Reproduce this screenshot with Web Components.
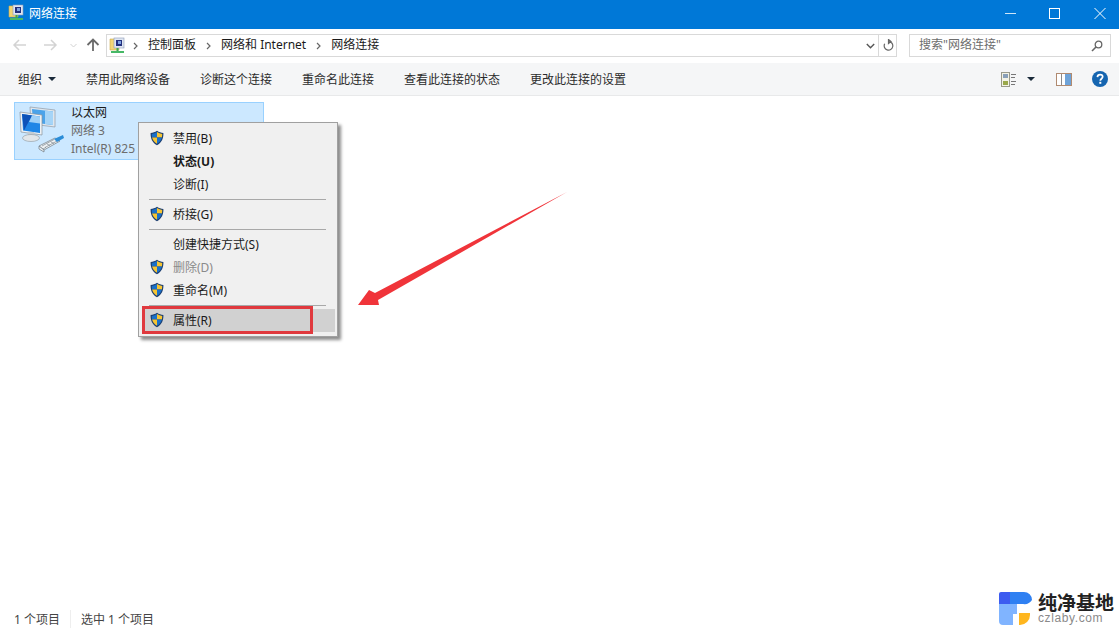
<!DOCTYPE html>
<html lang="zh-CN">
<head>
<meta charset="utf-8">
<title>网络连接</title>
<style>
  html, body { margin: 0; height: 100%; overflow: hidden; background: #fff; }
  body { font-family: "Noto Sans", "Noto Sans CJK SC", sans-serif; font-size: 12px; color: #1a1a1a; }
</style>
</head>
<body>
<net-window></net-window>

<script>
const FOLDER_ICON = `
  <svg width="17" height="17" viewBox="0 0 17 17">
    <path d="M1 2h5l1 1h3v10H1z" fill="#f2d675" stroke="#c9a94a" stroke-width=".6"/>
    <rect x="5" y="1" width="10" height="10" fill="#dfe6f2" stroke="#8d9ab5" stroke-width=".6"/>
    <rect x="7" y="3" width="6" height="6" fill="#23307e"/>
    <rect x="9" y="4" width="3" height="3" fill="#7da2e0"/>
    <rect x="7.5" y="11" width="2" height="3" fill="#3aa655"/>
    <rect x="2" y="14" width="13" height="2" fill="#46b866"/>
  </svg>`;

class ShieldIcon extends HTMLElement {
  connectedCallback() {
    this.attachShadow({ mode: "open" }).innerHTML = `
      <style>:host { display: block; width: 16px; height: 16px; } svg { display: block; }</style>
      <svg width="16" height="16" viewBox="0 0 16 16">
        <path d="M8 .8C6 2.2 4 2.8 1.6 3c-.2 5.400 1.600 9.600 6.400 12.200C12.800 12.600 14.600 8.400 14.400 3 12 2.800 10 2.200 8 .8z" fill="#1d3f70"/>
        <path d="M8 2C6.400 3 4.600 3.600 2.800 3.900c0 .9.100 2.200.3 3.600H8z" fill="#1a70c8"/>
        <path d="M8 2c1.600 1 3.400 1.600 5.200 1.900 0 .9-.100 2.200-.3 3.600H8z" fill="#f7c531"/>
        <path d="M3.100 7.500H8v6.300C5.200 12 3.700 10 3.100 7.500z" fill="#f7c531"/>
        <path d="M12.900 7.500H8v6.300c2.800-1.800 4.300-3.800 4.900-6.300z" fill="#1a70c8"/>
      </svg>`;
  }
}
customElements.define("shield-icon", ShieldIcon);

class TitleBar extends HTMLElement {
  connectedCallback() {
    this.attachShadow({ mode: "open" }).innerHTML = `
      <style>
        :host { display: flex; align-items: center; height: 29px; background: #0078d7; color: #fff; padding-left: 8px; font-size: 12px; }
        .icon { display: flex; width: 21px; margin-bottom: 4px; }
        .name { flex: 1; margin-bottom: 4px; }
        .ctl { display: flex; margin-right: -4px; }
        .ctl svg { display: block; width: 45px; height: 29px; }
      </style>
      <span class="icon">${FOLDER_ICON}</span>
      <span class="name">网络连接</span>
      <span class="ctl">
        <svg viewBox="0 0 45 29"><path d="M17 13.500h11" stroke="#cfe6f8" fill="none"/></svg>
        <svg viewBox="0 0 45 29"><rect x="16.500" y="8.500" width="10" height="10" stroke="#fff" fill="none"/></svg>
        <svg viewBox="0 0 45 29"><path d="M16.500 8l11 11M27.500 8l-11 11" stroke="#fff" fill="none"/></svg>
      </span>`;
  }
}
customElements.define("title-bar", TitleBar);

class NavBar extends HTMLElement {
  connectedCallback() {
    const chevron = `<svg width="6" height="8" viewBox="0 0 6 8"><path d="M1 1l3 3-3 3" fill="none" stroke="#666" stroke-width="1.200"/></svg>`;
    this.attachShadow({ mode: "open" }).innerHTML = `
      <style>
        :host { display: flex; align-items: center; height: 34px; box-sizing: border-box; background: #fff; padding: 0 8px 1px 0; font-size: 12px; color: #1a1a1a; }
        .arrows { display: flex; width: 106px; flex: none; margin-bottom: 2px; }
        .arrows svg { display: block; }
        .box { display: flex; align-items: center; height: 23px; box-sizing: border-box; border: 1px solid #d9d9d9; background: #fff; }
        .addr { width: 791px; flex: none; }
        .folder { display: flex; margin-left: 2px; }
        .sep { display: flex; width: 25px; justify-content: center; flex: none; }
        .sep.first { width: 21px; margin-left: 1px; justify-content: flex-start; padding-left: 6px; box-sizing: border-box; }
        .crumb, .hint { white-space: nowrap; margin-bottom: 3px; }
        .tail { margin-left: auto; display: flex; align-items: center; height: 100%; }
        .drop { width: 15px; display: flex; justify-content: center; }
        .refresh { width: 17px; height: 100%; border-left: 1px solid #d9d9d9; display: flex; align-items: center; justify-content: center; }
        .search { width: 202px; flex: none; margin-left: 12px; padding: 0 7px 0 9px; color: #6d6d6d; justify-content: space-between; }
      </style>
      <span class="arrows">
        <svg width="106" height="22" viewBox="0 0 106 22">
          <g fill="none" stroke="#d3d3d3" stroke-width="1.500">
            <path d="M14 11h12M19 6l-5 5 5 5"/>
            <path d="M56 11H44M51 6l5 5-5 5"/>
            <path d="M70.500 10l3 3 3-3" stroke-width="1"/>
          </g>
          <path d="M93 17V6M87.500 11L93 5.500l5.500 5.500" fill="none" stroke="#6a6a6a" stroke-width="1.800"/>
        </svg>
      </span>
      <span class="box addr">
        <span class="folder">${FOLDER_ICON}</span>
        <span class="sep first">${chevron}</span>
        <span class="crumb">控制面板</span>
        <span class="sep">${chevron}</span>
        <span class="crumb">网络和 Internet</span>
        <span class="sep">${chevron}</span>
        <span class="crumb">网络连接</span>
        <span class="tail">
          <span class="drop"><svg width="9" height="6" viewBox="0 0 9 6"><path d="M.8 1l3.700 3.700L8.200 1" fill="none" stroke="#555" stroke-width="1.400"/></svg></span>
          <span class="refresh"><svg width="12" height="13" viewBox="0 0 12 13"><path d="M6.500 2.500a4.300 4.300 0 1 1-3.800 2.300M6.500 .5v4L9 2.500z" fill="none" stroke="#666" stroke-width="1.200"/></svg></span>
        </span>
      </span>
      <span class="box search">
        <span class="hint">搜索"网络连接"</span>
        <svg width="12" height="12" viewBox="0 0 12 12"><circle cx="7.500" cy="4.500" r="3.300" fill="none" stroke="#666" stroke-width="1.300"/><path d="M5 7l-4 4" stroke="#666" stroke-width="1.600"/></svg>
      </span>`;
  }
}
customElements.define("nav-bar", NavBar);

class ToolBar extends HTMLElement {
  connectedCallback() {
    const labels = ["禁用此网络设备", "诊断这个连接", "重命名此连接", "查看此连接的状态", "更改此连接的设置"];
    this.attachShadow({ mode: "open" }).innerHTML = `
      <style>
        :host { display: flex; align-items: center; gap: 30px; height: 33px; box-sizing: border-box; padding: 0 11px 0 18px; background: #f5f6f7; border-bottom: 1px solid #e8e9ea; font-size: 12px; color: #2b2b2b; }
        .org { display: flex; align-items: center; gap: 6px; }
        .tri { width: 0; height: 0; border: 4px solid transparent; border-top: 4px solid #1a2a3a; border-bottom: 0; }
        .right { margin-left: auto; display: flex; align-items: center; }
        .right svg { display: block; }
      </style>
      <span class="org">组织<span class="tri"></span></span>
      ${labels.map(t => `<span>${t}</span>`).join("")}
      <span class="right">
        <svg width="15" height="15" viewBox="0 0 15 15">
          <rect x=".5" y=".5" width="8" height="14" fill="#f3f3e6" stroke="#9a9a8a"/>
          <rect x="2" y="2" width="5" height="4" fill="#8aa0b8"/>
          <rect x="2" y="9" width="5" height="4" fill="#9aa84a"/>
          <path d="M10 2.500h5M10 5.500h4M10 9.500h5M10 12.500h4" stroke="#777"/>
        </svg>
        <span class="tri" style="margin-left:11px"></span>
        <svg style="margin-left:21px" width="16" height="13" viewBox="0 0 16 13">
          <rect x=".5" y=".5" width="15" height="12" fill="#fff" stroke="#b08a70"/>
          <rect x="9" y="1" width="6" height="11" fill="#6ea3d8"/>
          <path d="M5.500 1v11" stroke="#8a8a8a"/>
        </svg>
        <svg style="margin-left:20px" width="16" height="16" viewBox="0 0 16 16">
          <circle cx="8" cy="8" r="8" fill="#1565b0"/>
          <path d="M5.400 6.100C5.500 4.500 6.700 3.600 8.100 3.600c1.500 0 2.600.9 2.600 2.200 0 1.900-2.400 2-2.400 3.900" fill="none" stroke="#fff" stroke-width="1.700"/>
          <rect x="7.300" y="10.800" width="2" height="2" fill="#fff"/>
        </svg>
      </span>`;
  }
}
customElements.define("tool-bar", ToolBar);

class NetItem extends HTMLElement {
  connectedCallback() {
    this.attachShadow({ mode: "open" }).innerHTML = `
      <style>
        :host { display: flex; width: 250px; height: 58px; box-sizing: border-box; background: #cce8ff; border: 1px solid #99d1ff; padding: 2px 0 0 3px; }
        svg { display: block; flex: none; }
        .text { margin: -1px 0 0 5px; display: flex; flex-direction: column; font-size: 12px; line-height: 18px; color: #6d6d6d; white-space: nowrap; }
        .name { color: #1a1a1a; }
      </style>
      <svg width="48" height="52" viewBox="0 0 48 52">
        <path d="M12 2l25 3v17l-24-3z" fill="#dfe7ee" stroke="#8f9aa5" stroke-width=".7"/>
        <path d="M14 4l21 2.500v13.500l-20-2.500z" fill="#4aa3ea"/>
        <path d="M27 5.500l8 1v13.500l-8-1z" fill="#a5d4f7"/>
        <path d="M2 7l22 3v20l-21-3z" fill="#eef2f5" stroke="#87929c" stroke-width=".7"/>
        <path d="M4 9l18 2.500v16.500L5 25.500z" fill="#1f86e6"/>
        <path d="M4 9l10 1.400L6 25.600z" fill="#0d52b8"/>
        <path d="M14 10.500l8 1v7l-11-1.500z" fill="#9ed0f7"/>
        <path d="M10 27h6v5h-6z" fill="#c6ccd1"/>
        <ellipse cx="13" cy="33" rx="8.500" ry="3.500" fill="#e2e6e9" stroke="#9aa3aa" stroke-width=".7"/>
        <g fill="#eef1f3" stroke="#6f7a82" stroke-width=".7">
          <path d="M21 41l16-8 5 3-16 9z"/>
          <path d="M21 41v3l5 3v-2z"/>
        </g>
        <path d="M24 41l12-6.500M27 42.500l12-6.500M25 44l3-1.700M29 39l3 1.500M33 37l3 1.500" fill="none" stroke="#7d8890" stroke-width=".7"/>
        <path d="M36 34l9-4 1 3-7 4z" fill="#2a8dd8"/>
      </svg>
      <span class="text">
        <span class="name">以太网</span>
        <span>网络 3</span>
        <span>Intel(R) 825</span>
      </span>`;
  }
}
customElements.define("net-item", NetItem);

class MenuItem extends HTMLElement {
  connectedCallback() {
    this.attachShadow({ mode: "open" }).innerHTML = `
      <style>
        :host { display: flex; align-items: center; height: 23px; box-sizing: border-box; padding: 0 0 2px 30px; position: relative; font-size: 12px; color: #1a1a1a; white-space: nowrap; }
        :host([strong]) { font-weight: 700; }
        :host([disabled]) { color: #8a8a8a; }
        :host([hot]) { background: #d1d1d1; }
        .ic { position: absolute; left: 6px; top: 3px; }
      </style>
      ${this.hasAttribute("shield") ? `<shield-icon class="ic"></shield-icon>` : ""}
      <slot></slot>`;
  }
}
customElements.define("menu-item", MenuItem);

class ContextMenu extends HTMLElement {
  connectedCallback() {
    this.attachShadow({ mode: "open" }).innerHTML = `
      <style>
        :host { position: absolute; left: 138px; top: 122px; width: 200px; box-sizing: border-box; background: #f0f0f0; border: 1px solid #a0a0a0; box-shadow: 3px 3px 3px rgba(0,0,0,.45); padding: 4px 2px 4px 4px; }
        .sep { height: 1px; background: #a8a8a8; margin: 3px 9px 3px 6px; }
        .hotwrap { position: relative; }
        .mark { position: absolute; left: -1px; top: -3px; width: 171px; height: 28px; box-sizing: border-box; border: 3px solid #e0393e; pointer-events: none; }
      </style>
      <menu-item shield>禁用(B)</menu-item>
      <menu-item strong>状态(U)</menu-item>
      <menu-item>诊断(I)</menu-item>
      <div class="sep"></div>
      <menu-item shield>桥接(G)</menu-item>
      <div class="sep"></div>
      <menu-item>创建快捷方式(S)</menu-item>
      <menu-item shield disabled>删除(D)</menu-item>
      <menu-item shield>重命名(M)</menu-item>
      <div class="sep"></div>
      <div class="hotwrap">
        <menu-item shield hot>属性(R)</menu-item>
        <div class="mark"></div>
      </div>`;
  }
}
customElements.define("context-menu", ContextMenu);

class StatusBar extends HTMLElement {
  connectedCallback() {
    this.attachShadow({ mode: "open" }).innerHTML = `
      <style>
        :host { display: flex; align-items: center; height: 22px; box-sizing: border-box; padding: 0 0 2px 14px; font-size: 12px; color: #444; background: #fff; }
        span + span { margin-left: 10px; padding-left: 10px; border-left: 1px solid #eee; }
      </style>
      <span>1 个项目</span>
      <span>选中 1 个项目</span>`;
  }
}
customElements.define("status-bar", StatusBar);

class BrandMark extends HTMLElement {
  connectedCallback() {
    this.attachShadow({ mode: "open" }).innerHTML = `
      <style>
        :host { position: absolute; right: 5px; bottom: 6px; display: flex; align-items: center; gap: 6px; background: #fff; }
        svg { display: block; flex: none; }
        .t { display: flex; flex-direction: column; }
        .cn { font: 700 19px/20px "Noto Sans CJK SC", sans-serif; color: #222; white-space: nowrap; }
        .en { font: 12px/13px "Liberation Sans", sans-serif; color: #8a8a8a; letter-spacing: .6px; }
      </style>
      <svg width="33" height="33" viewBox="0 0 33 33">
        <path d="M2 0h9v12H0V2a2 2 0 0 1 2-2z" fill="#3d5cf0"/>
        <path d="M11 0h14a8 8 0 0 1 8 8v0a9 9 0 0 1-9 4H11z" fill="#2f80f2"/>
        <path d="M0 12h18v10h-4v11H4a4 4 0 0 1-4-4z" fill="#80b4ff"/>
        <path d="M20 21h11v2a10 10 0 0 1-10 10h-1z" fill="#ffb61e"/>
      </svg>
      <span class="t"><span class="cn">纯净基地</span><span class="en">czlaby.com</span></span>`;
  }
}
customElements.define("brand-mark", BrandMark);

class NetWindow extends HTMLElement {
  connectedCallback() {
    this.attachShadow({ mode: "open" }).innerHTML = `
      <style>
        :host { display: flex; flex-direction: column; height: 631px; position: relative; overflow: hidden; background: #fff; }
        main { flex: 1; padding: 6px 14px; }
        .arrow { position: absolute; left: 0; top: 0; pointer-events: none; }
      </style>
      <title-bar></title-bar>
      <nav-bar></nav-bar>
      <tool-bar></tool-bar>
      <main><net-item></net-item></main>
      <status-bar></status-bar>
      <context-menu></context-menu>
      <svg class="arrow" width="1119" height="631" viewBox="0 0 1119 631">
        <path d="M567 192L375 293l-6-3-11 15 21 0-1-5z" fill="#f0343a"/>
      </svg>
      <brand-mark></brand-mark>`;
  }
}
customElements.define("net-window", NetWindow);
</script>
</body>
</html>
